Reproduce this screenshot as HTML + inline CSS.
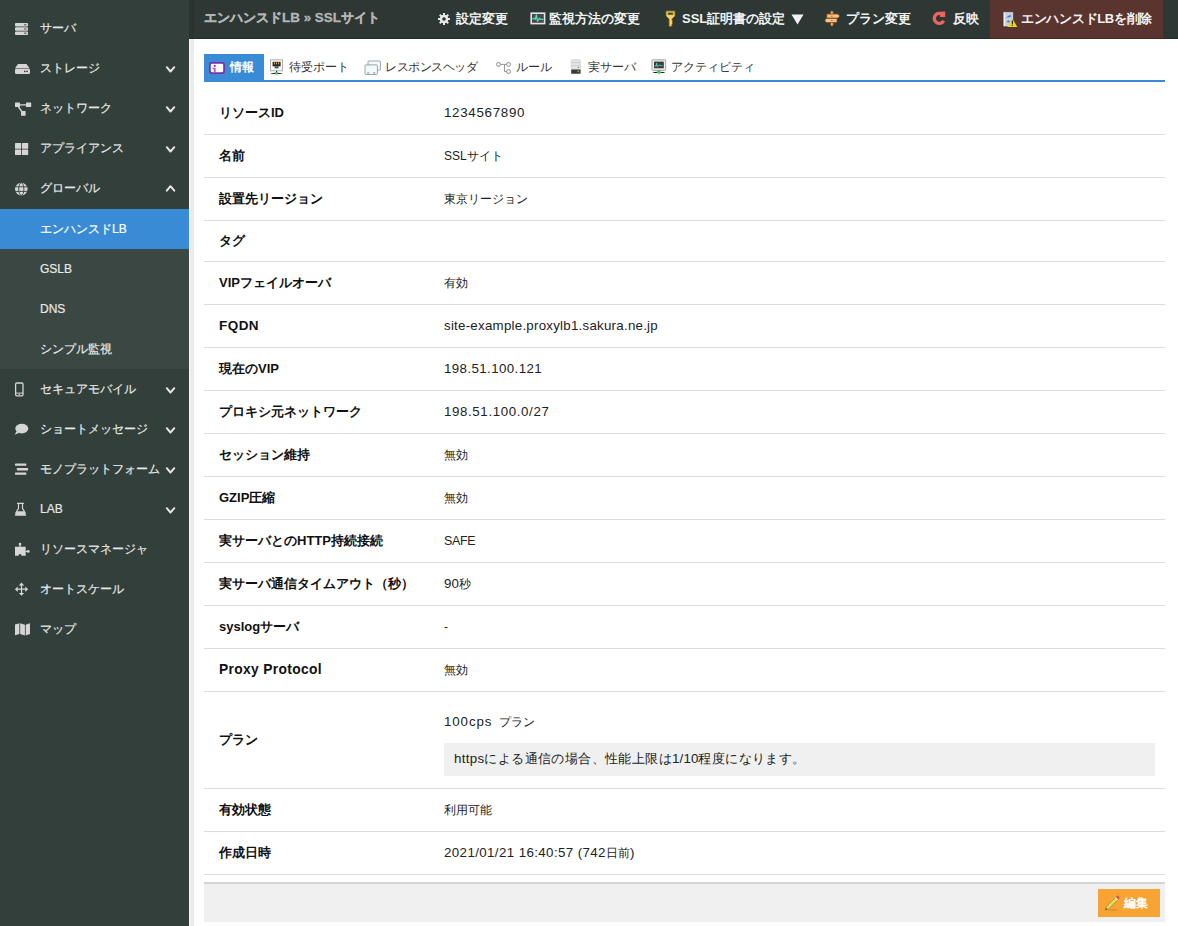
<!DOCTYPE html>
<html><head><meta charset="utf-8">
<style>
*{box-sizing:border-box;margin:0;padding:0}
html,body{width:1178px;height:926px;overflow:hidden;background:#fff;font-family:"Liberation Sans",sans-serif;}
#side{position:absolute;left:0;top:0;width:189px;height:926px;background:#323f3a;}
#side .it{position:absolute;left:0;width:189px;height:40px;color:#e8e8e8;font-size:12px;line-height:40px;white-space:nowrap}
#side .it .tx{position:absolute;left:40px;top:0;-webkit-text-stroke:0.2px #e8e8e8}
#side .act .tx{-webkit-text-stroke:0.2px #fff}
#side .ic{position:absolute;left:0;top:0;width:40px;height:40px}
#side .chev{position:absolute;left:160px;top:0;width:24px;height:40px}
#side .sub{position:absolute;left:0;top:249px;width:189px;height:120px;background:#3a4742}
#side .act{background:#3a8bd6;color:#fff}
#gutter{position:absolute;left:189px;top:39px;width:5px;height:887px;background:#ebebeb;border-left:1px solid #f8f8f8}
#hdr{position:absolute;left:189px;top:0;width:989px;height:39px;background:#2d3835;border-bottom:1px solid #232d2a}
#hdr .title{position:absolute;left:15px;top:0;line-height:35px;color:#b4b4b4;font-weight:bold;white-space:nowrap;-webkit-text-stroke:0.3px #b4b4b4}
#hdr .a{position:absolute;top:0;line-height:37px;color:#f2f2f2;font-weight:bold;font-size:13px;white-space:nowrap}
#hdr .del{position:absolute;left:801px;top:0;width:173px;height:39px;background:#5a342e;border-bottom:1px solid #48261f}
#hdr svg{position:absolute}
#tabs{position:absolute;left:204px;top:54px;width:961px;height:28px;border-bottom:2px solid #3a8bd6}
#tabs .t{position:absolute;top:0;height:26px;line-height:26px;color:#333;white-space:nowrap}
#tabs .on{position:absolute;left:0;top:0;width:60px;height:26px;background:#3a8bd6}
#tabs svg{position:absolute}
#tbl{position:absolute;left:204px;top:92px;width:961px}
.r{position:relative;border-bottom:1px solid #dcdcdc;height:43px}
.r .l{position:absolute;left:15px;top:0;line-height:42px;font-weight:bold;color:#111;white-space:nowrap}
.r .v{position:absolute;left:240px;top:0;line-height:42px;color:#222;white-space:nowrap}
.note{position:absolute;left:240px;top:51px;width:711px;height:33px;background:#f0f0f0;line-height:29px;padding-left:10px;color:#222;white-space:nowrap}
#foot{position:absolute;left:204px;top:882px;width:961px;height:40px;background:#f0f0f0;border-top:2px solid #d5d5d5}
#edit{position:absolute;left:894px;top:5px;width:62px;height:28px;background:#f8a434;color:#fff;font-weight:bold;line-height:28px}
</style></head><body>
<div id="side">
<div class="sub"></div>
<div class="it" style="top:8px"><svg class="ic" viewBox="0 0 40 40"><g fill="#d6d6d6"><rect x="15" y="15" width="13" height="3.6" rx="1"/><rect x="15" y="19.2" width="13" height="3.6" rx="1"/><rect x="15" y="23.4" width="13" height="3.6" rx="1"/></g><g fill="#555"><rect x="24.2" y="16.2" width="2.2" height="1.2"/><rect x="24.2" y="20.4" width="2.2" height="1.2"/><rect x="24.2" y="24.6" width="2.2" height="1.2"/></g></svg><span class="tx" id="s0" style="font-size:12px">サーバ</span></div>
<div class="it" style="top:48px"><svg class="ic" viewBox="0 0 40 40"><g fill="#d6d6d6"><path d="M18 16h8.5l3 4.3H15z"/><rect x="15" y="20.8" width="15" height="5.2" rx="1.2"/></g><g fill="#333"><circle cx="24.8" cy="23.4" r="0.8"/><circle cx="27" cy="23.4" r="0.8"/></g></svg><span class="tx" id="s1" style="font-size:12px">ストレージ</span><svg class="chev" viewBox="0 0 24 40"><path d="M6.8 19.2l3.7 4.3 3.8-4.3" stroke="#e6e6e6" stroke-width="2" fill="none" stroke-linecap="round" stroke-linejoin="round"/></svg></div>
<div class="it" style="top:88px"><svg class="ic" viewBox="0 0 40 40"><g fill="#d6d6d6"><rect x="15" y="14.6" width="5" height="4.4" rx="0.6"/><rect x="26" y="14.6" width="5.2" height="4.4" rx="0.6"/><rect x="21" y="23" width="4.6" height="4.8" rx="0.6"/></g><g stroke="#d6d6d6" stroke-width="1.3"><path d="M20 16.8h6M18.5 19l3.3 4.5"/></g></svg><span class="tx" id="s2" style="font-size:12px">ネットワーク</span><svg class="chev" viewBox="0 0 24 40"><path d="M6.8 19.2l3.7 4.3 3.8-4.3" stroke="#e6e6e6" stroke-width="2" fill="none" stroke-linecap="round" stroke-linejoin="round"/></svg></div>
<div class="it" style="top:128px"><svg class="ic" viewBox="0 0 40 40"><g fill="#d6d6d6"><rect x="15" y="15" width="6.2" height="5.8" rx="0.5"/><rect x="22" y="15" width="6.2" height="5.8" rx="0.5"/><rect x="15" y="21.6" width="6.2" height="5.5" rx="0.5"/><rect x="22" y="21.6" width="6.2" height="5.5" rx="0.5"/></g></svg><span class="tx" id="s3" style="font-size:12px">アプライアンス</span><svg class="chev" viewBox="0 0 24 40"><path d="M6.8 19.2l3.7 4.3 3.8-4.3" stroke="#e6e6e6" stroke-width="2" fill="none" stroke-linecap="round" stroke-linejoin="round"/></svg></div>
<div class="it" style="top:168px"><svg class="ic" viewBox="0 0 40 40"><circle cx="21.3" cy="21.1" r="6.3" fill="#d6d6d6"/><g stroke="#323f3a" stroke-width="0.9" fill="none"><ellipse cx="21.3" cy="21.1" rx="2.6" ry="6.3"/><path d="M15 18.8h12.6M15 23.4h12.6"/></g></svg><span class="tx" id="s4" style="font-size:12px">グローバル</span><svg class="chev" viewBox="0 0 24 40"><path d="M6.8 22.7l3.7-4.5 3.8 4.5" stroke="#e6e6e6" stroke-width="2" fill="none" stroke-linecap="round" stroke-linejoin="round"/></svg></div>
<div class="it act" style="top:209px"><span class="tx" id="s5" style="font-size:12px">エンハンスドLB</span></div>
<div class="it" style="top:249px"><span class="tx" id="s6" style="font-size:12px">GSLB</span></div>
<div class="it" style="top:289px"><span class="tx" id="s7" style="font-size:12px">DNS</span></div>
<div class="it" style="top:329px"><span class="tx" id="s8" style="font-size:12px">シンプル監視</span></div>
<div class="it" style="top:369px"><svg class="ic" viewBox="0 0 40 40"><rect x="15.6" y="14" width="7.4" height="12.8" rx="1.3" fill="none" stroke="#d6d6d6" stroke-width="1.3"/><rect x="15.6" y="23.6" width="7.4" height="1" fill="#d6d6d6"/><circle cx="19.3" cy="25.4" r="0.7" fill="#d6d6d6"/></svg><span class="tx" id="s9" style="font-size:12px">セキュアモバイル</span><svg class="chev" viewBox="0 0 24 40"><path d="M6.8 19.2l3.7 4.3 3.8-4.3" stroke="#e6e6e6" stroke-width="2" fill="none" stroke-linecap="round" stroke-linejoin="round"/></svg></div>
<div class="it" style="top:409px"><svg class="ic" viewBox="0 0 40 40"><ellipse cx="21.8" cy="19.6" rx="6.5" ry="4.8" fill="#d6d6d6"/><path d="M16.5 22.2l-1.8 3.6 4.6-2z" fill="#d6d6d6"/></svg><span class="tx" id="s10" style="font-size:12px">ショートメッセージ</span><svg class="chev" viewBox="0 0 24 40"><path d="M6.8 19.2l3.7 4.3 3.8-4.3" stroke="#e6e6e6" stroke-width="2" fill="none" stroke-linecap="round" stroke-linejoin="round"/></svg></div>
<div class="it" style="top:449px"><svg class="ic" viewBox="0 0 40 40"><g fill="#d6d6d6"><rect x="15" y="14.4" width="11.3" height="2.4" rx="0.6"/><rect x="16.8" y="19" width="11.3" height="2.4" rx="0.6"/><rect x="15" y="23.4" width="11.3" height="2.4" rx="0.6"/></g></svg><span class="tx" id="s11" style="font-size:12px">モノプラットフォーム</span><svg class="chev" viewBox="0 0 24 40"><path d="M6.8 19.2l3.7 4.3 3.8-4.3" stroke="#e6e6e6" stroke-width="2" fill="none" stroke-linecap="round" stroke-linejoin="round"/></svg></div>
<div class="it" style="top:489px"><svg class="ic" viewBox="0 0 40 40"><path d="M17 14.35h6.9M18.5 14.6v4.8l-3 5.2M22.5 14.6v4.8l3 5.2" stroke="#d6d6d6" stroke-width="1.2" fill="none"/><path d="M17.4 22.3h6.3l2.4 3.7c0.3 0.5 0 0.8-0.5 0.8h-10.2c-0.5 0-0.8-0.3-0.5-0.8z" fill="#d6d6d6"/></svg><span class="tx" id="s12" style="font-size:12px">LAB</span><svg class="chev" viewBox="0 0 24 40"><path d="M6.8 19.2l3.7 4.3 3.8-4.3" stroke="#e6e6e6" stroke-width="2" fill="none" stroke-linecap="round" stroke-linejoin="round"/></svg></div>
<div class="it" style="top:529px"><svg class="ic" viewBox="0 0 40 40"><path d="M15 17.7h10.7v9H21.6a1.6 1.6 0 0 0-3.2 0H15z" fill="#d6d6d6"/><rect x="19.35" y="15.3" width="1.3" height="2.6" fill="#d6d6d6"/><circle cx="20" cy="15" r="1.35" fill="#d6d6d6"/><rect x="25.5" y="21.75" width="2.6" height="1.3" fill="#d6d6d6"/><circle cx="28.3" cy="22.4" r="1.35" fill="#d6d6d6"/></svg><span class="tx" id="s13" style="font-size:12px">リソースマネージャ</span></div>
<div class="it" style="top:569px"><svg class="ic" viewBox="0 0 40 40"><path fill="#d6d6d6" d="M21.50 13.60 L24.20 16.40 L22.15 16.40 L22.15 19.55 L25.30 19.55 L25.30 17.50 L28.10 20.20 L25.30 22.90 L25.30 20.85 L22.15 20.85 L22.15 24.00 L24.20 24.00 L21.50 26.80 L18.80 24.00 L20.85 24.00 L20.85 20.85 L17.70 20.85 L17.70 22.90 L14.90 20.20 L17.70 17.50 L17.70 19.55 L20.85 19.55 L20.85 16.40 L18.80 16.40z"/></svg><span class="tx" id="s14" style="font-size:12px">オートスケール</span></div>
<div class="it" style="top:609px"><svg class="ic" viewBox="0 0 40 40"><path d="M15 15.6l4.4-1.4v10.8L15 26.3zM20.2 14.2l4.7 1.5v10.7l-4.7-1.4zM25.7 15.7l4.3-1.4v10.7l-4.3 1.4z" fill="#d6d6d6"/></svg><span class="tx" id="s15" style="font-size:12px">マップ</span></div>
</div>
<div id="hdr">
  <div class="title" id="h0" style="font-size:13.45px">エンハンスドLB » SSLサイト</div>
  <svg style="left:248px;top:12px" width="14" height="14" viewBox="0 0 14 14"><g fill="#e8e8e8"><circle cx="7" cy="7" r="4.3"/><rect x="6" y="1" width="2" height="12"/><rect x="1" y="6" width="12" height="2"/><rect x="6" y="1" width="2" height="12" transform="rotate(45 7 7)"/><rect x="6" y="1" width="2" height="12" transform="rotate(-45 7 7)"/></g><circle cx="7" cy="7" r="1.8" fill="#2d3835"/></svg>
  <svg style="left:341px;top:12px" width="16" height="13" viewBox="0 0 16 13"><rect x="0.4" y="0.4" width="15" height="12" fill="#e4e4e4"/><rect x="2" y="2" width="11.8" height="8.8" fill="#4a4952"/><path d="M2.3 7.3L4.3 6.2L5.4 7.2L6.4 3L7.5 9.1L9.4 6.3L10.6 7.3L13.3 7.4" stroke="#52e0aa" stroke-width="1.3" fill="none" stroke-linejoin="round"/></svg>
  <svg style="left:476px;top:10px" width="11" height="17" viewBox="0 0 11 17"><path d="M1 1h9v5l-3 3v1.2l1 0.8-1 1 1 1-1 1v1.5l-1.5 1.5-1.5-1.5V9L1 6z" fill="#f2d46c" stroke="#8a5a10" stroke-width="0.9"/><rect x="3" y="2.8" width="5" height="2" fill="#2d3835" stroke="#8a8a10" stroke-width="0.6"/></svg>
  <svg style="left:635px;top:10px" width="17" height="17" viewBox="0 0 17 17"><g stroke="#8a4a10" stroke-width="0.9"><rect x="6.6" y="1" width="2.6" height="15" rx="1" fill="#f5c890"/><path d="M2.8 4h11.2l1.6 2.1-1.6 2.1H2.8z" fill="#f2c490"/><path d="M13 8.4H2.4L0.8 10.5l1.6 2.1H13z" fill="#f2c490"/></g><circle cx="7.9" cy="6.1" r="0.6" fill="#6a3a10"/><circle cx="7.9" cy="10.5" r="0.6" fill="#6a3a10"/></svg>
  <svg style="left:743px;top:11px" width="15" height="16" viewBox="0 0 15 16"><path d="M11.7 9.8A5 5 0 1 1 10.5 3.6" stroke="#ef6460" stroke-width="3.3" fill="none"/><path d="M8.2 0.8l5 -0.4v5.6h-5.2z" fill="#ef6460"/></svg>
  <div class="a" id="h1" style="left:267px;font-size:13px">設定変更</div><div class="a" id="h2" style="left:360px;font-size:13px">監視方法の変更</div><div class="a" id="h3" style="left:493px;font-size:13px">SSL証明書の設定</div><div class="a" id="h4" style="left:657px;font-size:13px">プラン変更</div><div class="a" id="h5" style="left:763.5px;font-size:13px">反映</div>
  <svg style="left:602px;top:14px" width="13" height="11" viewBox="0 0 13 11"><path d="M0.5 0.5h12L6.5 10.5z" fill="#f2f2f2"/></svg>
  <div class="del">
    <svg style="left:12px;top:11px" width="16" height="17" viewBox="0 0 16 17"><rect x="1" y="0.8" width="10.5" height="15" fill="#c6cfdc" stroke="#3a2a28" stroke-width="0.6"/><rect x="2" y="1.5" width="1.2" height="13.5" fill="#e8eef6"/><path d="M3.6 6.5l2.4-1.3 1.8-1.1 1.8 1-1.8 1.2z M4.6 10.5l1.8-1.2 1.8 1.2-1.8 1.2z" fill="#4a72e0"/><path d="M10.3 7.5l5 8.5H5.3z" fill="#e6d820"/><rect x="9.8" y="9.5" width="1.1" height="3.4" fill="#111"/><rect x="9.8" y="13.6" width="1.1" height="1.1" fill="#111"/></svg>
    <div class="a" id="h6" style="left:31px;font-size:13px;letter-spacing:-0.3px">エンハンスドLBを削除</div>
  </div>
</div>
<div id="gutter"></div><div style="position:absolute;left:189px;top:0;width:5px;height:38px;background:#29342f"></div>
<div id="tabs">
  <div class="on"></div>
  <svg style="left:5px;top:8px" width="16" height="12" viewBox="0 0 16 12"><rect x="0.9" y="0.9" width="14.2" height="10.2" rx="2" fill="#fafafa" stroke="#7a32a8" stroke-width="1.8"/><rect x="4.8" y="3" width="1.8" height="1.8" fill="#7a32a8"/><path d="M3.7 5.8h2.9v4.5H4.8V7.3H3.7z" fill="#a264c8"/></svg>
  <svg style="left:65px;top:5px" width="15" height="16" viewBox="0 0 15 16"><rect x="1.5" y="0.8" width="12" height="11" fill="#f8f8ff" stroke="#aaa" stroke-width="0.9"/><rect x="3.6" y="2.8" width="8" height="4.5" fill="#2a2a2a"/><rect x="5.6" y="7.2" width="4" height="2.2" fill="#555"/><g fill="#e0b050"><rect x="5" y="3.3" width="0.9" height="2"/><rect x="7.1" y="3.3" width="0.9" height="2"/><rect x="9.2" y="3.3" width="0.9" height="2"/></g><rect x="7.1" y="11.8" width="1" height="2" fill="#222"/><ellipse cx="7.5" cy="14.4" rx="6" ry="0.6" fill="#222"/><circle cx="7.5" cy="14.4" r="1.4" fill="#3ad04a"/></svg>
  <svg style="left:160px;top:6px" width="18" height="16" viewBox="0 0 18 16"><rect x="4" y="1" width="12.4" height="9.2" rx="0.8" fill="#f4fafa" stroke="#8c9c9c" stroke-width="0.9"/><rect x="1" y="4.9" width="12.4" height="9.6" rx="0.8" fill="#f4fafa" stroke="#8c9c9c" stroke-width="0.9"/><path d="M3 12.8h2.4M9 12.8h2.4M4.2 12.8v1.4M10.2 12.8v1.4" stroke="#8c9c9c" stroke-width="0.8"/></svg>
  <svg style="left:291px;top:6px" width="17" height="16" viewBox="0 0 17 16"><g stroke="#8a8a8a" stroke-width="0.9" fill="#f4f4f4"><path d="M5.6 4.4h6.6M9.5 4.4v7.1h2.6" fill="none"/><circle cx="3.5" cy="4.4" r="2"/><circle cx="13.5" cy="4.4" r="2"/><circle cx="13.5" cy="11.5" r="2"/></g></svg>
  <svg style="left:366px;top:5px" width="11" height="16" viewBox="0 0 11 16"><rect x="1.2" y="0.8" width="9.4" height="10" rx="0.8" fill="#e4e4e4" stroke="#ccc" stroke-width="0.6"/><path d="M1.5 3.7h8.8M1.5 6.6h8.8" stroke="#c8c8c8" stroke-width="0.8"/><rect x="1.2" y="10.6" width="9.4" height="4.2" rx="0.6" fill="#3a3a3a"/><circle cx="8.3" cy="12.3" r="0.9" fill="#6ad040"/><circle cx="8.3" cy="8.3" r="0.6" fill="#555"/></svg>
  <svg style="left:447px;top:5px" width="16" height="16" viewBox="0 0 16 16"><rect x="1" y="0.8" width="13.7" height="10.6" rx="0.8" fill="#eee" stroke="#999" stroke-width="0.9"/><rect x="3" y="2.6" width="9.8" height="6.7" fill="#3a3a42"/><path d="M3.5 7h1.6l0.6-2.8 0.5 3.5 1.1-0.5 1.3-1.4 1.2 0.8 1.6 0.1" stroke="#5de0b0" stroke-width="0.9" fill="none"/><rect x="7.3" y="11.4" width="1.2" height="1.5" fill="#666"/><ellipse cx="7.9" cy="13.4" rx="6.2" ry="0.7" fill="#222"/><ellipse cx="7.9" cy="13.4" rx="2" ry="1.3" fill="#3ad04a"/></svg>
  <div class="t" id="t0" style="left:26px;font-size:12px;letter-spacing:0px;color:#fff;font-weight:bold">情報</div><div class="t" id="t1" style="left:85px;font-size:12px;letter-spacing:0px">待受ポート</div><div class="t" id="t2" style="left:181px;font-size:12px;letter-spacing:-0.5px">レスポンスヘッダ</div><div class="t" id="t3" style="left:312px;font-size:12px;letter-spacing:0px">ルール</div><div class="t" id="t4" style="left:384px;font-size:12px;letter-spacing:0px">実サーバ</div><div class="t" id="t5" style="left:467px;font-size:12px;letter-spacing:0px">アクティビティ</div>
</div>
<div id="tbl">
<div class="r" style="height:43px"><span class="l" id="l0" style="font-size:13px;line-height:42px">リソースID</span><span class="v" id="v0" style="font-size:12px"><span id="v0a" style="font-size:13.3px;letter-spacing:0.72px">1234567890</span></span></div>
<div class="r" style="height:43px"><span class="l" id="l1" style="font-size:13px;line-height:42px">名前</span><span class="v" id="v1" style="font-size:12px">SSLサイト</span></div>
<div class="r" style="height:43px"><span class="l" id="l2" style="font-size:13px;line-height:42px">設置先リージョン</span><span class="v" id="v2" style="font-size:12px">東京リージョン</span></div>
<div class="r" style="height:41px"><span class="l" id="l3" style="font-size:13px;line-height:40px">タグ</span></div>
<div class="r" style="height:43px"><span class="l" id="l4" style="font-size:13px;line-height:42px">VIPフェイルオーバ</span><span class="v" id="v4" style="font-size:12px">有効</span></div>
<div class="r" style="height:43px"><span class="l" id="l5" style="font-size:13px;line-height:42px"><span id="l5a" style="font-size:13.5px;letter-spacing:0.45px">FQDN</span></span><span class="v" id="v5" style="font-size:12px"><span id="v5a" style="font-size:13.3px;letter-spacing:0.25px">site-example.proxylb1.sakura.ne.jp</span></span></div>
<div class="r" style="height:43px"><span class="l" id="l6" style="font-size:13px;line-height:42px">現在のVIP</span><span class="v" id="v6" style="font-size:12px"><span id="v6a" style="font-size:13.3px;letter-spacing:0.4px">198.51.100.121</span></span></div>
<div class="r" style="height:43px"><span class="l" id="l7" style="font-size:13px;line-height:42px">プロキシ元ネットワーク</span><span class="v" id="v7" style="font-size:12px"><span id="v7a" style="font-size:13.3px;letter-spacing:0.62px">198.51.100.0/27</span></span></div>
<div class="r" style="height:43px"><span class="l" id="l8" style="font-size:13px;line-height:42px">セッション維持</span><span class="v" id="v8" style="font-size:12px">無効</span></div>
<div class="r" style="height:43px"><span class="l" id="l9" style="font-size:13px;line-height:42px">GZIP圧縮</span><span class="v" id="v9" style="font-size:12px">無効</span></div>
<div class="r" style="height:43px"><span class="l" id="l10" style="font-size:13px;line-height:42px">実サーバとのHTTP持続接続</span><span class="v" id="v10" style="font-size:12px"><span id="v10a" style="font-size:12.4px;letter-spacing:-0.3px">SAFE</span></span></div>
<div class="r" style="height:43px"><span class="l" id="l11" style="font-size:13px;line-height:42px">実サーバ通信タイムアウト（秒）</span><span class="v" id="v11" style="font-size:12px"><span id="v11a" style="font-size:13.3px;letter-spacing:0px">90</span>秒</span></div>
<div class="r" style="height:43px"><span class="l" id="l12" style="font-size:13px;line-height:42px">syslogサーバ</span><span class="v" id="v12" style="font-size:12px">-</span></div>
<div class="r" style="height:43px"><span class="l" id="l13" style="font-size:13px;line-height:42px"><span id="l13a" style="font-size:13.8px;letter-spacing:0.35px">Proxy Protocol</span></span><span class="v" id="v13" style="font-size:12px">無効</span></div>
<div class="r" style="height:97px"><span class="l" id="l14" style="font-size:13px;line-height:96px">プラン</span><span class="v" id="v14" style="top:20px;line-height:20px;font-size:12px"><span id="v14a" style="font-size:13.3px;letter-spacing:0.9px">100cps</span><span id="v14b" style="font-size:13.3px;letter-spacing:3.2px"> </span>プラン</span><div class="note"><span id="n0" style="font-size:13px;letter-spacing:0.4px"><span id="n0a" style="font-size:13.3px;letter-spacing:0.33px">https</span>による通信の場合、性能上限は<span id="n0b" style="font-size:13.3px;letter-spacing:0.1px">1/10</span>程度になります。</span></div></div>
<div class="r" style="height:43px"><span class="l" id="l15" style="font-size:13px;line-height:42px">有効状態</span><span class="v" id="v15" style="font-size:12px">利用可能</span></div>
<div class="r" style="height:43px"><span class="l" id="l16" style="font-size:13px;line-height:42px">作成日時</span><span class="v" id="v16" style="font-size:12px"><span id="v16a" style="font-size:13.3px;letter-spacing:0.4px">2021/01/21 16:40:57 (742</span>日前<span id="v16b" style="font-size:13.3px;letter-spacing:0px">)</span></span></div>
</div>
<div id="foot"><div id="edit">
<svg style="position:absolute;left:5px;top:5px" width="18" height="18" viewBox="0 0 18 18"><ellipse cx="10" cy="16" rx="5" ry="0.9" fill="#d88a20" opacity="0.7"/><path d="M2.5 15.8l1-3.4 9.3-9.3 2.4 2.4-9.3 9.3z" fill="#e8d860" stroke="#8a7a20" stroke-width="0.6"/><path d="M12.8 3.1l1.2-1.2c0.4-0.4 1-0.4 1.4 0l1 1c0.4 0.4 0.4 1 0 1.4l-1.2 1.2z" fill="#e05050"/><path d="M12.8 3.1l2.4 2.4-0.9 0.9-2.4-2.4z" fill="#ddd"/><path d="M2.5 15.8l0.5-1.6 1.1 1.1z" fill="#111"/></svg>
<span style="position:absolute;left:26px;font-size:12px">編集</span></div></div>
</body></html>
